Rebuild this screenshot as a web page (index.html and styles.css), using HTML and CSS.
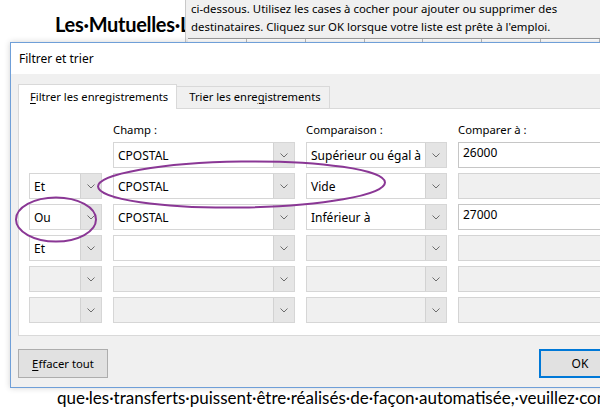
FILE: index.html
```html
<!DOCTYPE html>
<html lang="fr">
<head>
<meta charset="utf-8">
<title>Filtrer et trier</title>
<link rel="stylesheet" href="styles.css">
</head>
<body>
<div class="screen">
  <div class="doc">
    <h1 class="doc-title">Les·Mutuelles·Libres</h1>
    <p class="doc-line">que·les·transferts·puissent·être·réalisés·de·façon·automatisée,·veuillez·contacter·</p>
  </div>

  <div class="backwin">
    <p>ci-dessous. Utilisez les cases à cocher pour ajouter ou supprimer des</p>
    <p>destinataires. Cliquez sur OK lorsque votre liste est prête à l'emploi.</p>
    <div class="backgrid"><span></span><span></span><span></span><span></span><span></span><span></span><span></span></div>
  </div>

  <div class="dialog">
    <div class="titlebar">Filtrer et trier</div>
    <div class="dbody">
      <div class="tabs">
        <div class="tab active"><u>F</u>iltrer les enregistrements</div>
        <div class="tab">Trier les enre<u>g</u>istrements</div>
      </div>
      <div class="panel">
        <div class="grid">
          <div></div>
          <div class="lbl">Champ :</div>
          <div class="lbl">Comparaison :</div>
          <div class="lbl">Comparer à :</div>

          <div></div>
          <div class="combo"><span class="val">CPOSTAL</span><span class="btn-dd"><svg viewBox="0 0 8 5"><path d="M0.5 0.5L4 4L7.5 0.5"/></svg></span></div>
          <div class="combo"><span class="val">Supérieur ou égal à</span><span class="btn-dd"><svg viewBox="0 0 8 5"><path d="M0.5 0.5L4 4L7.5 0.5"/></svg></span></div>
          <div class="field">26000</div>

          <div class="combo"><span class="val">Et</span><span class="btn-dd"><svg viewBox="0 0 8 5"><path d="M0.5 0.5L4 4L7.5 0.5"/></svg></span></div>
          <div class="combo"><span class="val">CPOSTAL</span><span class="btn-dd"><svg viewBox="0 0 8 5"><path d="M0.5 0.5L4 4L7.5 0.5"/></svg></span></div>
          <div class="combo"><span class="val">Vide</span><span class="btn-dd"><svg viewBox="0 0 8 5"><path d="M0.5 0.5L4 4L7.5 0.5"/></svg></span></div>
          <div class="field off"></div>

          <div class="combo"><span class="val">Ou</span><span class="btn-dd"><svg viewBox="0 0 8 5"><path d="M0.5 0.5L4 4L7.5 0.5"/></svg></span></div>
          <div class="combo"><span class="val">CPOSTAL</span><span class="btn-dd"><svg viewBox="0 0 8 5"><path d="M0.5 0.5L4 4L7.5 0.5"/></svg></span></div>
          <div class="combo"><span class="val">Inférieur à</span><span class="btn-dd"><svg viewBox="0 0 8 5"><path d="M0.5 0.5L4 4L7.5 0.5"/></svg></span></div>
          <div class="field">27000</div>

          <div class="combo"><span class="val">Et</span><span class="btn-dd"><svg viewBox="0 0 8 5"><path d="M0.5 0.5L4 4L7.5 0.5"/></svg></span></div>
          <div class="combo"><span class="val"></span><span class="btn-dd"><svg viewBox="0 0 8 5"><path d="M0.5 0.5L4 4L7.5 0.5"/></svg></span></div>
          <div class="combo off"><span class="val"></span><span class="btn-dd"><svg viewBox="0 0 8 5"><path d="M0.5 0.5L4 4L7.5 0.5"/></svg></span></div>
          <div class="field off"></div>

          <div class="combo off"><span class="val"></span><span class="btn-dd"><svg viewBox="0 0 8 5"><path d="M0.5 0.5L4 4L7.5 0.5"/></svg></span></div>
          <div class="combo off"><span class="val"></span><span class="btn-dd"><svg viewBox="0 0 8 5"><path d="M0.5 0.5L4 4L7.5 0.5"/></svg></span></div>
          <div class="combo off"><span class="val"></span><span class="btn-dd"><svg viewBox="0 0 8 5"><path d="M0.5 0.5L4 4L7.5 0.5"/></svg></span></div>
          <div class="field off"></div>

          <div class="combo off"><span class="val"></span><span class="btn-dd"><svg viewBox="0 0 8 5"><path d="M0.5 0.5L4 4L7.5 0.5"/></svg></span></div>
          <div class="combo off"><span class="val"></span><span class="btn-dd"><svg viewBox="0 0 8 5"><path d="M0.5 0.5L4 4L7.5 0.5"/></svg></span></div>
          <div class="combo off"><span class="val"></span><span class="btn-dd"><svg viewBox="0 0 8 5"><path d="M0.5 0.5L4 4L7.5 0.5"/></svg></span></div>
          <div class="field off"></div>
        </div>
      </div>
      <div class="buttons">
        <button class="btn"><u>E</u>ffacer tout</button>
        <button class="btn ok">OK</button>
      </div>
    </div>
  </div>

  <svg class="marks" viewBox="0 0 600 407" width="600" height="407">
    <ellipse cx="241.5" cy="184.5" rx="143.5" ry="23" transform="rotate(-0.8 241.5 184.5)"/>
    <ellipse cx="56" cy="219.5" rx="40" ry="22"/>
  </svg>
</div>
</body>
</html>
```

FILE: styles.css
```css
* { box-sizing: border-box; margin: 0; padding: 0; }
html, body { width: 600px; height: 407px; overflow: hidden; background: #fff; }
body { font-family: "Noto Sans", sans-serif; color: #000; }

.screen { position: relative; width: 600px; height: 407px; overflow: hidden; }

/* Word document behind */
.doc { padding: 11px 0 0 55px; font-family: Lato, "Noto Sans", sans-serif; white-space: nowrap; }
.doc-title { font-size: 20px; font-weight: 700; line-height: 26px; letter-spacing: -0.3px; }
.doc-line { margin: 352px 0 0 2px; font-size: 17px; line-height: 18px; }

/* background dialog */
.backwin {
  position: absolute; left: 185px; top: 0; width: 415px; height: 42px;
  background: #f0f0f0; border-left: 1px solid #c8c8c8;
  padding-left: 5px; font-size: 11.4px; line-height: 18px; white-space: nowrap;
}
.backgrid {
  display: flex; height: 5px; margin: 2px 0 0 -3px;
  background: #fff; border-top: 1px solid #9a9a9a;
}
.backgrid span { width: 63px; border-right: 1px solid #b8b8b8; }

/* main dialog */
.dialog {
  position: absolute; left: 10px; top: 42px; width: 619px; height: 346px;
  border: 1px solid #6f9fd8; background: #f0f0f0;
  box-shadow: 0 0 6px rgba(0,0,0,0.18);
  font-size: 12px; display: flex; flex-direction: column;
}
.titlebar { height: 31px; line-height: 31px; padding-left: 8px; background: #fff; }
.dbody { flex: 1; padding: 10px 7px 9px; display: flex; flex-direction: column; }

.tabs { display: flex; align-items: flex-end; height: 24px; white-space: nowrap; font-size: 11.2px; }
.tab {
  height: 22px; line-height: 20px; padding: 0 8px 0 12px;
  border: 1px solid #d9d9d9; border-bottom: none; border-left: none; background: #f0f0f0;
}
.tab.active {
  height: 25px; margin-bottom: -1px; line-height: 23px; padding: 0 8px 0 11px;
  background: #fff; border-left: 1px solid #d9d9d9; position: relative; z-index: 1;
}
.tab u, .btn u { text-decoration: underline; text-underline-offset: 2px; }

.panel {
  background: #fff; border: 1px solid #d9d9d9;
  padding: 14px 10px 12px 10px; height: 228px;
}
.grid {
  display: grid;
  grid-template-columns: 73px 182px 141px 1fr;
  grid-template-rows: 14px repeat(6, 26px);
  column-gap: 11px; row-gap: 5px;
}
.lbl { line-height: 14px; white-space: nowrap; font-size: 11.3px; }

.combo {
  display: flex; border: 1px solid #d6d6d6; background: #fff;
}
.combo .val { flex: 1; padding: 1px 0 0 4px; line-height: 23px; overflow: hidden; white-space: nowrap; }
.combo .btn-dd {
  width: 21px; background: #e4e4e4; border-left: 1px solid #d2d2d2;
  display: flex; align-items: center; justify-content: center;
}
.btn-dd svg { width: 8px; height: 5px; fill: none; stroke: #6d6d6d; stroke-width: 1; }
.combo.off { background: #f0f0f0; }
.combo.off .btn-dd { background: #e6e6e6; }

.field {
  border: 1px solid #c6c6c6; background: #fff; padding: 0 4px; line-height: 19px;
}
.field.off { background: #f0f0f0; border-color: #d4d4d4; }

.buttons { display: flex; justify-content: space-between; margin-top: 13px; }
.btn {
  font: inherit; font-size: 11.3px; color: #000; width: 90px; height: 29px;
  background: #e1e1e1; border: 1px solid #adadad;
}
.btn.ok { width: 82px; border: 2px solid #0078d7; font-size: 12px; }

.marks { position: absolute; left: 0; top: 0; pointer-events: none; }
.marks ellipse { fill: none; stroke: #8a3795; stroke-width: 2; }
```
